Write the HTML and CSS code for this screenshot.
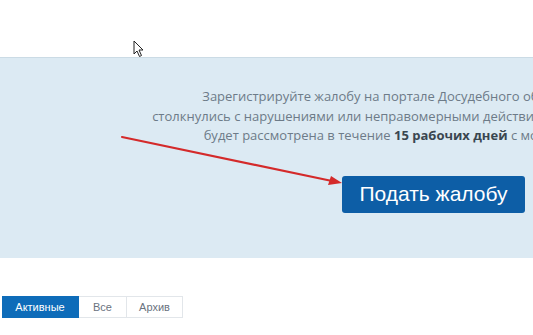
FILE: index.html
```html
<!DOCTYPE html>
<html lang="ru">
<head>
    <meta charset="UTF-8">
    <meta name="viewport" content="width=device-width, initial-scale=1.0">
    <title>Досудебное обжалование</title>
    <link rel="stylesheet" href="styles.css">
</head>
<body>
    <div class="page">
        <header class="top-bar"></header>

        <section class="promo">
            <p class="promo-text">
                Зарегистрируйте жалобу на портале Досудебного обжалования, если вы<br>
                столкнулись с нарушениями или неправомерными действиями органов власти. Жалоба<br>
                будет рассмотрена в течение <b>15 рабочих дней</b> с момента регистрации.
            </p>
            <div class="promo-actions">
                <button class="btn btn-primary">Подать жалобу</button>
            </div>
        </section>

        <nav class="tabs">
            <a href="#" class="tab active">Активные</a>
            <a href="#" class="tab">Все</a>
            <a href="#" class="tab">Архив</a>
        </nav>

        <!-- стрелка-аннотация поверх страницы -->
        <svg class="annotation" width="533" height="335" viewBox="0 0 533 335">
            <line x1="122" y1="137" x2="332" y2="181" stroke="#d42a2a" stroke-width="2.2" stroke-linecap="round"/>
            <polygon points="342,183 328,185 331,176" fill="#d42a2a"/>
        </svg>

        <svg class="cursor" width="12" height="18" viewBox="0 0 12 18">
            <path d="M1 1 L1 14 L4 11 L6.5 16.5 L8.5 15.5 L6 10 L10 10 Z" fill="#fff" stroke="#222" stroke-width="1" stroke-linejoin="round"/>
        </svg>
    </div>
</body>
</html>
```

FILE: styles.css
```css
:root {
    --band: #dceaf3;
    --band-border: #cbdbe5;
    --text-muted: #6d7b88;
    --primary: #0d5ea6;
    --tab-active: #0e6cb9;
    --tab-border: #e2e6ea;
}

* {
    margin: 0;
    padding: 0;
    box-sizing: border-box;
}

body {
    background-color: #fff;
    font-family: 'Open Sans', sans-serif;
    overflow: hidden;
}

.page {
    position: relative;
    width: 533px;
    height: 335px;
    overflow: hidden;
}

.top-bar {
    height: 57px;
    background-color: #fff;
}

.promo {
    height: 201px;
    background-color: var(--band);
    border-top: 1px solid var(--band-border);
    padding-top: 29px;
}

.promo-text {
    width: 700px;
    margin-left: 84px;
    text-align: center;
    font-size: 13px;
    line-height: 19.5px;
    color: var(--text-muted);
    white-space: nowrap;
}

.promo-text b {
    color: #3a4650;
    font-weight: 700;
}

.promo-actions {
    display: flex;
    justify-content: flex-end;
    padding-right: 8px;
    margin-top: 30px;
}

.btn {
    border: none;
    outline: none;
    cursor: pointer;
}

.btn-primary {
    width: 183px;
    height: 37px;
    border-radius: 3px;
    background-color: var(--primary);
    color: #fff;
    font-family: 'Liberation Sans', Arial, sans-serif;
    font-size: 21px;
}

.tabs {
    display: flex;
    margin: 38px 0 0 2px;
}

.tab {
    display: flex;
    align-items: center;
    justify-content: center;
    height: 22px;
    font-family: 'Liberation Sans', Arial, sans-serif;
    font-size: 11px;
    color: #6a7380;
    text-decoration: none;
    border: 1px solid var(--tab-border);
    border-left: none;
}

.tab:nth-child(1) { width: 77px; }
.tab:nth-child(2) { width: 48px; }
.tab:nth-child(3) { width: 56px; }

.tab.active {
    background-color: var(--tab-active);
    border-color: var(--tab-active);
    color: #fff;
}

.annotation {
    position: absolute;
    left: 0;
    top: 0;
    pointer-events: none;
}

.cursor {
    position: absolute;
    left: 133px;
    top: 40px;
}
```
